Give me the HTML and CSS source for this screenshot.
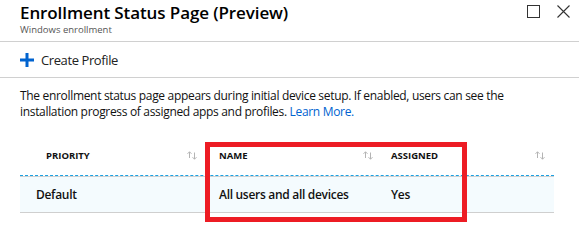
FILE: index.html
```html
<!DOCTYPE html>
<html>
<head>
<meta charset="utf-8">
<link rel="stylesheet" href="styles.css">
</head>
<body>
<div class="blade">
  <header class="blade-header">
    <div class="titles">
      <h1 class="title">Enrollment Status Page (Preview)</h1>
      <div class="subtitle">Windows enrollment</div>
    </div>
    <div class="controls">
      <svg class="ctl" width="13" height="13" viewBox="0 0 13 13"><rect x="0.5" y="0.5" width="12" height="12" fill="none" stroke="#333" stroke-width="1"/></svg>
      <svg class="ctl" width="13" height="13" viewBox="0 0 13 13"><path d="M0.5 0.5L12.5 12.5M12.5 0.5L0.5 12.5" stroke="#333" stroke-width="1.1" fill="none"/></svg>
    </div>
  </header>
  <div class="toolbar">
    <svg class="plus" width="14" height="14" viewBox="0 0 14 14"><path d="M5.5 0h3v5.5H14v3H8.5V14h-3V8.5H0v-3h5.5z" fill="#0063cf"/></svg>
    <span class="cmd">Create Profile</span>
  </div>
  <p class="desc"><span>The enrollment status page appears during initial device setup. If enabled, users can see the </span><span>installation progress of assigned apps and profiles.</span> <a class="link">Learn More.</a></p>
  <div class="grid">
    <div class="row head">
      <div class="cell c1"><span class="hlabel p">PRIORITY</span><svg class="sort" width="10" height="9" viewBox="0 0 10 9"><path d="M2.5 7V0.8M0.5 2.8L2.5 0.8L4.5 2.8M7.5 1.5V8.2M5.5 6.2L7.5 8.2L9.5 6.2" stroke="#b4b4b4" stroke-width="1" fill="none"/></svg></div>
      <div class="cell c2"><span class="hlabel">NAME</span><svg class="sort" width="10" height="9" viewBox="0 0 10 9"><path d="M2.5 7V0.8M0.5 2.8L2.5 0.8L4.5 2.8M7.5 1.5V8.2M5.5 6.2L7.5 8.2L9.5 6.2" stroke="#b4b4b4" stroke-width="1" fill="none"/></svg></div>
      <div class="cell c3"><span class="hlabel">ASSIGNED</span><svg class="sort" width="10" height="9" viewBox="0 0 10 9"><path d="M2.5 7V0.8M0.5 2.8L2.5 0.8L4.5 2.8M7.5 1.5V8.2M5.5 6.2L7.5 8.2L9.5 6.2" stroke="#b4b4b4" stroke-width="1" fill="none"/></svg></div>
    </div>
    <div class="row data">
      <div class="cell c1"><span class="val p">Default</span></div>
      <div class="cell c2"><span class="val">All users and all devices</span></div>
      <div class="cell c3"><span class="val">Yes</span></div>
    </div>
    <div class="highlight"></div>
  </div>
</div>
</body>
</html>
```
FILE: styles.css
```css
html, body {
  margin: 0;
  padding: 0;
  background: #fff;
}
body {
  font-family: "Open Sans", "Noto Sans", sans-serif;
  color: #000;
  width: 579px;
  height: 228px;
  overflow: hidden;
}
.blade-header {
  display: flex;
  justify-content: space-between;
  align-items: flex-start;
  height: 42px;
  box-sizing: border-box;
  border-bottom: 1px solid #d0d0d0;
  padding-left: 20px;
}
.titles {
  padding-top: 2px;
}
.title {
  margin: 0;
  font-size: 17px;
  font-weight: 600;
  letter-spacing: -0.1px;
  line-height: 22px;
  color: #000;
}
.subtitle {
  font-size: 9.5px;
  line-height: 12px;
  color: #555;
}
.controls {
  display: flex;
  gap: 17px;
  padding-top: 5px;
  padding-right: 9px;
}
.ctl {
  display: block;
}
.toolbar {
  display: flex;
  align-items: center;
  height: 36px;
  box-sizing: border-box;
  border-bottom: 1px solid #d0d0d0;
  padding-left: 20px;
}
.plus {
  display: block;
  margin-right: 7px;
}
.cmd {
  font-size: 13px;
  letter-spacing: -0.4px;
  color: #222;
}
.desc {
  margin: 0;
  padding: 10px 30px 0 20px;
  font-size: 12px;
  letter-spacing: -0.32px;
  line-height: 16.4px;
  color: #111;
}
.link {
  color: #0063cf;
}
.grid {
  position: relative;
  margin: 20px 25px 0 20px;
}
.row {
  display: flex;
}
.cell {
  box-sizing: border-box;
  display: flex;
  align-items: center;
  justify-content: space-between;
}
.c1 { width: 183px; padding-right: 6px; }
.c2 { width: 175px; padding-left: 16px; padding-right: 5px; }
.c3 { width: 176px; padding-left: 13px; padding-right: 9px; }
.head {
  height: 35px;
  box-sizing: border-box;
  border-bottom: 1px dashed #1ba1e2;
}
.head .cell {
  align-items: flex-start;
  padding-top: 9px;
}
.hlabel {
  font-size: 9.5px;
  font-weight: 700;
  color: #111;
  line-height: 12px;
}
.hlabel.p {
  padding-left: 26px;
}
.sort {
  display: block;
  margin-top: 1px;
}
.data {
  height: 37px;
  background: #f4fbfe;
  border-top: 1px solid #d0d0d0;
  border-bottom: 1px solid #cfcfcf;
  box-sizing: border-box;
}
.val {
  font-size: 12px;
  font-weight: 600;
  letter-spacing: -0.3px;
  color: #111;
}
.val.p {
  padding-left: 16px;
}
.highlight {
  position: absolute;
  left: 185px;
  top: 1px;
  width: 262px;
  height: 80px;
  box-sizing: border-box;
  border: 5px solid #ed1c24;
  pointer-events: none;
}
```
